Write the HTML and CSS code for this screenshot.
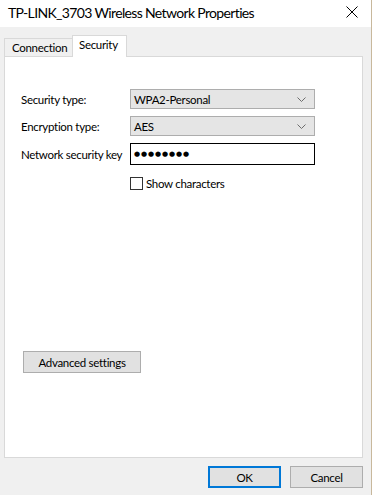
FILE: index.html
```html
<!DOCTYPE html>
<html>
<head>
<meta charset="utf-8">
<link rel="stylesheet" href="styles.css">
</head>
<body>
<div class="window">
  <div class="titlebar">
    <span class="title">TP-LINK_3703 Wireless Network Properties</span>
    <svg class="close" width="12" height="12" viewBox="0 0 12 12"><path d="M0.5 0.5 L11.5 11.5 M11.5 0.5 L0.5 11.5" stroke="#000" stroke-width="1" fill="none"/></svg>
  </div>
  <div class="body">
    <div class="tabs">
      <div class="tab">Connection</div>
      <div class="tab active">Security</div>
    </div>
    <div class="panel">
      <div class="form">
        <label class="label">Security type:</label>
        <div class="select"><span>WPA2-Personal</span><svg class="chev" width="9" height="5" viewBox="0 0 9 5"><path d="M0.5 0.5 L4.5 4.5 L8.5 0.5" stroke="#6d6d6d" fill="none"/></svg></div>
        <label class="label">Encryption type:</label>
        <div class="select"><span>AES</span><svg class="chev" width="9" height="5" viewBox="0 0 9 5"><path d="M0.5 0.5 L4.5 4.5 L8.5 0.5" stroke="#6d6d6d" fill="none"/></svg></div>
        <label class="label">Network security key</label>
        <div class="input"><span class="dots">●●●●●●●●</span></div>
        <div></div>
        <div class="check"><span class="box"></span><span>Show characters</span></div>
      </div>
      <div class="spacer"></div>
      <button class="btn adv">Advanced settings</button>
    </div>
    <div class="footer">
      <button class="btn ok">OK</button>
      <button class="btn">Cancel</button>
    </div>
  </div>
</div>
</body>
</html>
```
FILE: styles.css
```css
* { box-sizing: border-box; }
html, body { margin: 0; padding: 0; }
body {
  width: 372px;
  height: 495px;
  font-family: "Lato", "Open Sans", sans-serif;
  font-size: 11.5px;
  letter-spacing: -0.3px;
  color: #000;
  background: #f0f0f0;
  overflow: hidden;
}
.window {
  width: 372px;
  height: 495px;
  display: flex;
  flex-direction: column;
  border-right: 1px solid #c8b89c;
}
.titlebar {
  height: 27px;
  background: #fff;
  display: flex;
  align-items: center;
  padding: 0 0 3px 8px;
}
.title {
  font-size: 14px;
  letter-spacing: -0.65px;
  flex: 1;
  white-space: nowrap;
}
.close { margin-right: 13px; }
.body {
  flex: 1;
  display: flex;
  flex-direction: column;
  padding: 8px 8px 0 4px;
}
.tabs {
  display: flex;
  align-items: flex-end;
  height: 21px;
  margin-left: -2px;
  position: relative;
  z-index: 1;
}
.tab {
  height: 18px;
  padding: 0 0 0 7px;
  border: 1px solid #d9d9d9;
  border-bottom: none;
  background: #f0f0f0;
  line-height: 18px;
  margin-left: 2px;
  width: 69px;
}
.tab.active {
  margin-left: -1px;
  height: 22px;
  background: #fff;
  padding: 0 0 0 6px;
  line-height: 18px;
  margin-bottom: -1px;
  width: 55px;
}
.panel {
  height: 402px;
  background: #fff;
  border: 1px solid #d9d9d9;
  padding: 32px 0 0 16px;
  display: flex;
  flex-direction: column;
}
.form {
  display: grid;
  grid-template-columns: 109px 185px;
  row-gap: 7px;
  align-items: center;
}
.label { white-space: nowrap; }
.select {
  height: 20px;
  background: #e5e5e5;
  border: 1px solid #adadad;
  display: flex;
  align-items: center;
  padding: 0 8px 0 3px;
}
.select span { flex: 1; }
.input {
  height: 22px;
  border: 1px solid #000;
  background: #fff;
  display: flex;
  align-items: center;
  padding-left: 3px;
}
.dots {
  font-family: "DejaVu Sans", sans-serif;
  font-size: 7px;
  letter-spacing: 0.9px;
}
.check {
  display: flex;
  align-items: center;
  margin-top: 4px;
  height: 14px;
}
.box {
  width: 13px;
  height: 13px;
  border: 1px solid #333;
  background: #fff;
  margin-right: 3px;
}
.spacer { height: 161px; }
.btn {
  font-family: "Lato", "Open Sans", sans-serif;
  font-size: 11.5px;
  letter-spacing: -0.3px;
  color: #000;
  background: #e1e1e1;
  border: 1px solid #adadad;
  height: 22px;
  padding: 0;
  margin: 0;
}
.adv {
  width: 118px;
  margin-left: 2px;
}
.footer {
  display: flex;
  justify-content: flex-end;
  gap: 9px;
  padding: 8px 0 0 0;
}
.footer .btn { width: 73px; }
.ok {
  border: 2px solid #0078d7;
}
```
